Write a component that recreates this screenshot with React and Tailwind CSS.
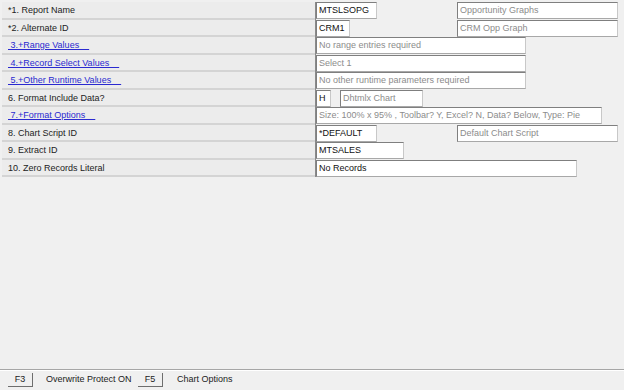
import React from "react"

const rows = [
    { label: "*1. Report Name", fields: [{ text: "MTSLSOPG", w: 61 }, { text: "Opportunity Graphs", w: 161, ml: 80, dim: true }] },
    { label: "*2. Alternate ID", fields: [{ text: "CRM1", w: 34 }, { text: "CRM Opp Graph", w: 161, ml: 107, dim: true }] },
    { label: "3.+Range Values", link: true, fields: [{ text: "No range entries required", w: 210, dim: true }] },
    { label: "4.+Record Select Values", link: true, fields: [{ text: "Select 1", w: 210, dim: true }] },
    { label: "5.+Other Runtime Values", link: true, fields: [{ text: "No other runtime parameters required", w: 210, dim: true }] },
    { label: "6. Format Include Data?", fields: [{ text: "H", w: 15 }, { text: "Dhtmlx Chart", w: 83, ml: 9, dim: true }] },
    { label: "7.+Format Options", link: true, fields: [{ text: "Size: 100% x 95% , Toolbar? Y, Excel? N, Data? Below, Type: Pie", w: 286, dim: true }] },
    { label: "8. Chart Script ID", fields: [{ text: "*DEFAULT", w: 61 }, { text: "Default Chart Script", w: 161, ml: 80, dim: true }] },
    { label: "9. Extract ID", fields: [{ text: "MTSALES", w: 88 }] },
    { label: "10. Zero Records Literal", fields: [{ text: "No Records", w: 261 }] },
]

const Field = ({ f }) => (
    <div
        className={`h-[17px] box-border bg-white border border-[#7f7f7f] border-r-[#c8c8c8] border-b-[#a8a8a8] px-[2px] leading-[15px] whitespace-nowrap overflow-hidden ${
            f.dim ? "text-[#8c8c8c]" : "text-[#111]"
        }`}
        style={{ width: f.w, marginLeft: f.ml || 0 }}
    >
        {f.text}
    </div>
)

const FKey = ({ k }) => (
    <div className="h-[14px] w-[25px] box-border border-r border-b border-[#6e6e6e] bg-[#f0f0f0] text-center leading-[13px]">
        {k}
    </div>
)

export default function App() {
    return (
        <div
            className="w-[624px] h-[390px] bg-[#f0f0f0] text-[9px] text-[#222] flex flex-col overflow-hidden"
            style={{ fontFamily: '"Liberation Sans", Arial, sans-serif' }}
        >
            <div className="pt-[2px] pl-[2px] flex flex-col">
                {rows.map((r, i) => (
                    <div key={i} className="flex h-[17.5px] items-start">
                        <div className="w-[313px] h-full box-border bg-[#ececec] border-b-[2px] border-[#d4d4d4] pl-[6px] leading-[16px] whitespace-pre">
                            {r.link ? (
                                <span className="text-[#2a2ad0] underline">{" " + r.label + "    "}</span>
                            ) : (
                                r.label
                            )}
                        </div>
                        <div className="w-px h-full bg-[#8a8a8a]" />
                        <div className="flex">
                            {r.fields.map((f, j) => (
                                <Field key={j} f={f} />
                            ))}
                        </div>
                    </div>
                ))}
            </div>
            <div className="flex-1" />
            <div className="h-px bg-[#a6a6a6]" />
            <div className="h-px bg-white" />
            <div className="h-[18px] flex items-center pl-[8px] mb-[1px] whitespace-nowrap">
                <FKey k="F3" />
                <span className="ml-[13px] w-[92px]">Overwrite Protect ON</span>
                <FKey k="F5" />
                <span className="ml-[14px]">Chart Options</span>
            </div>
        </div>
    )
}
